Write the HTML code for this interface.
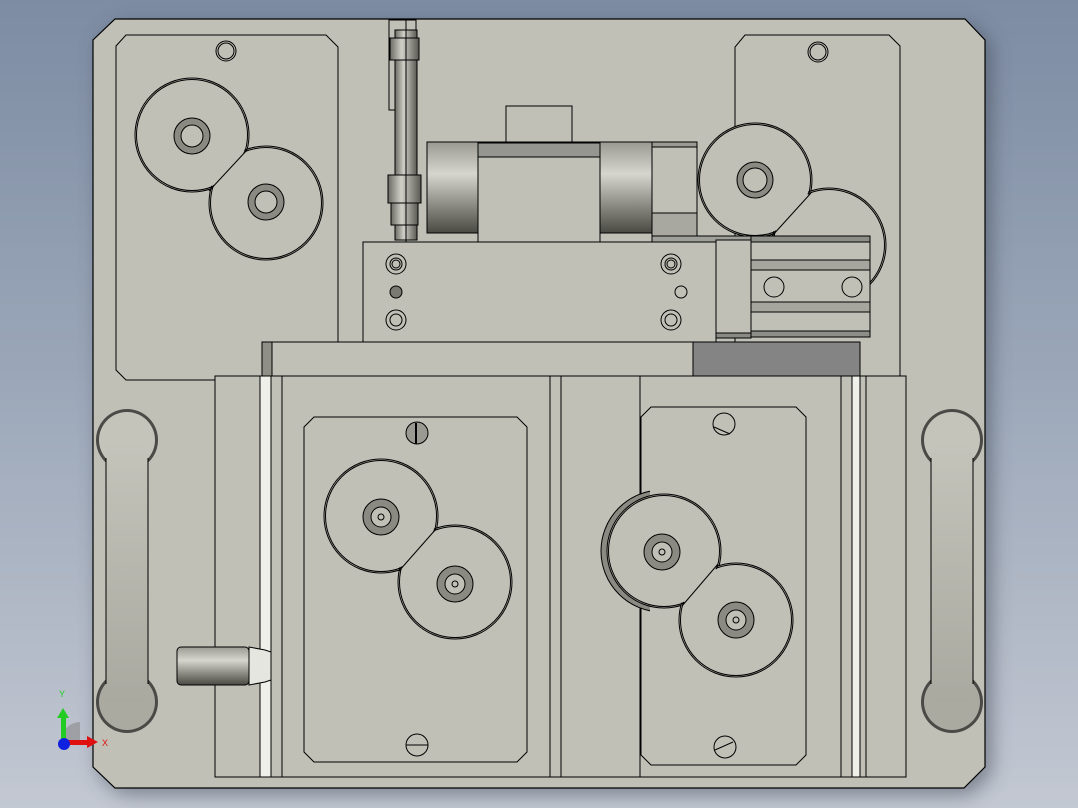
<!DOCTYPE html>
<html><head><style>
html,body{margin:0;padding:0;width:1078px;height:808px;overflow:hidden;}
body{background:linear-gradient(180deg,#7d8ca3 0%,#9aa6b8 45%,#c3c8d2 100%);}
svg{position:absolute;left:0;top:0;}
</style></head><body>
<svg width="1078" height="808" viewBox="0 0 1078 808" xmlns="http://www.w3.org/2000/svg" font-family="Liberation Sans, sans-serif">
<defs>
<linearGradient id="cylV" x1="0" y1="0" x2="0" y2="1">
<stop offset="0" stop-color="#9a9a92"/><stop offset="0.35" stop-color="#d6d6ce"/><stop offset="0.7" stop-color="#8a8a82"/><stop offset="1" stop-color="#4a4a44"/></linearGradient>
<linearGradient id="cylH" x1="0" y1="0" x2="1" y2="0">
<stop offset="0" stop-color="#6a6a64"/><stop offset="0.4" stop-color="#d0d0c8"/><stop offset="1" stop-color="#5a5a54"/></linearGradient>
<linearGradient id="slot" x1="0" y1="0" x2="0" y2="1"><stop offset="0" stop-color="#c4c4bb"/><stop offset="1" stop-color="#a9a9a0"/></linearGradient>
<filter id="blur"><feGaussianBlur stdDeviation="10"/></filter>
<clipPath id="leftHalf"><rect x="590" y="480" width="60" height="140"/></clipPath>
</defs>
<polygon points="115,19 965,19 985,40 985,767 964,788 115,788 93,767 93,40" fill="#3a4250" opacity="0.55" filter="url(#blur)" transform="translate(6,6)"/>
<polygon points="115,19 965,19 985,40 985,767 964,788 115,788 93,767 93,40" fill="#c0c0b7" stroke="#000" stroke-width="1.2"/>

<g fill="none" stroke="#000" stroke-width="1">
<polygon points="126,35 326,35 338,47 338,380 126,380 116,370 116,46" />
<circle cx="226" cy="51" r="10"/><circle cx="226" cy="51" r="8"/>
<polygon points="745,35 889,35 900,46 900,376 735,376 735,47"/>
<circle cx="818" cy="52" r="10"/><circle cx="818" cy="52" r="8"/>
</g>
<g stroke="#000">
<circle cx="192" cy="135" r="57" fill="#c0c0b7"/><circle cx="266" cy="203" r="57" fill="#c0c0b7"/>
<circle cx="192" cy="135" r="55.5" fill="none"/><circle cx="266" cy="203" r="55.5" fill="none"/>
</g>
<circle cx="192" cy="135" r="54.5" fill="#c0c0b7"/><circle cx="266" cy="203" r="54.5" fill="#c0c0b7"/>
<line x1="209" y1="191" x2="247" y2="150" stroke="#000"/>
<g stroke="#000">
<circle cx="755" cy="180" r="57" fill="#c0c0b7"/><circle cx="829" cy="245" r="57" fill="#c0c0b7"/>
<circle cx="755" cy="180" r="55.5" fill="none"/><circle cx="829" cy="245" r="55.5" fill="none"/>
</g>
<circle cx="755" cy="180" r="54.5" fill="#c0c0b7"/><circle cx="829" cy="245" r="54.5" fill="#c0c0b7"/>
<line x1="772" y1="236" x2="811" y2="193" stroke="#000"/>
<g>
<circle cx="192" cy="136" r="18" fill="#8a8a82" stroke="#000"/><circle cx="192" cy="136" r="11" fill="#c0c0b7" stroke="#000"/>
<circle cx="266" cy="202" r="18" fill="#8a8a82" stroke="#000"/><circle cx="266" cy="202" r="11" fill="#c0c0b7" stroke="#000"/>
<circle cx="755" cy="180" r="18" fill="#8a8a82" stroke="#000"/><circle cx="755" cy="180" r="12" fill="#c0c0b7" stroke="#000"/>
</g>

<rect x="389" y="20" width="27" height="90" fill="#c0c0b7" stroke="#000"/>
<rect x="395" y="30" width="22" height="210" fill="url(#cylH)" stroke="#000"/>
<rect x="388" y="175" width="33" height="28" fill="url(#cylH)" stroke="#000"/>
<rect x="391" y="203" width="27" height="22" fill="url(#cylH)" stroke="#000"/>
<rect x="390" y="38" width="29" height="22" fill="url(#cylH)" stroke="#000"/>
<line x1="406" y1="20" x2="406" y2="242" stroke="#000"/>

<rect x="506" y="106" width="66" height="37" fill="#c0c0b7" stroke="#000"/>
<rect x="478" y="142" width="122" height="100" fill="#c0c0b7" stroke="#000"/>
<rect x="478" y="143" width="122" height="14" fill="#969690" stroke="#000"/>
<rect x="427" y="142" width="51" height="91" fill="url(#cylV)" stroke="#000"/>
<rect x="600" y="142" width="52" height="91" fill="url(#cylV)" stroke="#000"/>
<rect x="652" y="142" width="45" height="94" fill="#c0c0b7" stroke="#000"/>
<rect x="652" y="142" width="45" height="5" fill="#9a9a92" stroke="#000"/>
<rect x="652" y="213" width="45" height="23" fill="#a8a8a0" stroke="#000"/>
<rect x="652" y="236" width="100" height="6" fill="#a0a09a" stroke="#000"/>

<rect x="363" y="242" width="353" height="100" fill="#c0c0b7" stroke="#000"/>
<g fill="none" stroke="#000">
<circle cx="396" cy="264" r="10"/><circle cx="396" cy="264" r="6"/><circle cx="396" cy="264" r="4"/>
<circle cx="396" cy="320" r="10"/><circle cx="396" cy="320" r="6"/>
<circle cx="671" cy="264" r="10"/><circle cx="671" cy="264" r="6"/><circle cx="671" cy="264" r="4"/>
<circle cx="671" cy="320" r="10"/><circle cx="671" cy="320" r="6"/>
<circle cx="681" cy="292" r="6"/>
</g>
<circle cx="396" cy="292" r="6" fill="#7a7a72" stroke="#000"/>
<rect x="716" y="240" width="35" height="98" fill="#c0c0b7" stroke="#000"/>
<rect x="716" y="333" width="35" height="5" fill="#8a8a84" stroke="#000"/>
<rect x="751" y="236" width="119" height="101" fill="#c0c0b7" stroke="#000"/>
<rect x="751" y="236" width="119" height="6" fill="#8e8e88" stroke="#000"/>
<rect x="751" y="260" width="119" height="10" fill="#a6a69e" stroke="#000"/>
<rect x="751" y="302" width="119" height="10" fill="#a6a69e" stroke="#000"/>
<rect x="751" y="331" width="119" height="6" fill="#8e8e88" stroke="#000"/>
<circle cx="774" cy="287" r="10" fill="none" stroke="#000"/>
<circle cx="852" cy="287" r="10" fill="none" stroke="#000"/>

<rect x="262" y="342" width="598" height="34" fill="#c0c0b7" stroke="#000"/>
<rect x="262" y="342" width="10" height="34" fill="#8f8f88" stroke="#000"/>
<rect x="693" y="342" width="167" height="34" fill="#848484" stroke="#000"/>

<rect x="215" y="376" width="691" height="401" fill="#c0c0b7" stroke="#000"/>
<rect x="260" y="376" width="11" height="401" fill="#f0f0ea" stroke="#000"/>
<line x1="282" y1="376" x2="282" y2="777" stroke="#000"/>
<line x1="550" y1="376" x2="550" y2="777" stroke="#000"/>
<line x1="561" y1="376" x2="561" y2="777" stroke="#000"/>
<line x1="640" y1="376" x2="640" y2="777" stroke="#000"/>
<line x1="841" y1="376" x2="841" y2="777" stroke="#000"/>
<rect x="852" y="376" width="8" height="401" fill="#f0f0ea" stroke="#000"/>
<line x1="866" y1="376" x2="866" y2="777" stroke="#000"/>

<g fill="none" stroke="#000">
<polygon points="314,417 517,417 527,427 527,752 517,762 314,762 304,752 304,427"/>
<circle cx="417" cy="745" r="11"/>
<line x1="406" y1="745" x2="428" y2="745"/>
<polygon points="651,407 796,407 806,417 806,755 796,765 651,765 641,755 641,417"/>
<circle cx="724" cy="424" r="11"/><line x1="714" y1="427" x2="730" y2="434"/>
<circle cx="725" cy="747" r="11"/><line x1="715" y1="750" x2="733" y2="742"/>
</g>
<circle cx="417" cy="433" r="11" fill="#9a9a92" stroke="#000"/>
<line x1="416" y1="423" x2="416" y2="444" stroke="#000" stroke-width="2"/>
<g stroke="#000">
<circle cx="381" cy="516" r="57" fill="#c0c0b7"/><circle cx="455" cy="582" r="57" fill="#c0c0b7"/>
<circle cx="381" cy="516" r="55.5" fill="none"/><circle cx="455" cy="582" r="55.5" fill="none"/>
</g>
<circle cx="381" cy="516" r="54.5" fill="#c0c0b7"/><circle cx="455" cy="582" r="54.5" fill="#c0c0b7"/>
<line x1="399" y1="571" x2="436" y2="529" stroke="#000"/>
<circle cx="662" cy="551" r="61" fill="#8a8a82" stroke="#000" clip-path="url(#leftHalf)"/>
<g stroke="#000">
<circle cx="664" cy="551" r="57" fill="#c0c0b7"/><circle cx="736" cy="620" r="57" fill="#c0c0b7"/>
<circle cx="664" cy="551" r="55.5" fill="none"/><circle cx="736" cy="620" r="55.5" fill="none"/>
</g>
<circle cx="664" cy="551" r="54.5" fill="#c0c0b7"/><circle cx="736" cy="620" r="54.5" fill="#c0c0b7"/>
<line x1="682" y1="606" x2="718" y2="564" stroke="#000"/>
<g>
<circle cx="381" cy="517" r="18" fill="#8a8a82" stroke="#000"/><circle cx="381" cy="517" r="10" fill="#c0c0b7" stroke="#000"/><circle cx="381" cy="517" r="3" fill="none" stroke="#000"/>
<circle cx="455" cy="584" r="18" fill="#8a8a82" stroke="#000"/><circle cx="455" cy="584" r="10" fill="#c0c0b7" stroke="#000"/><circle cx="455" cy="584" r="3" fill="none" stroke="#000"/>
<circle cx="662" cy="552" r="18" fill="#8a8a82" stroke="#000"/><circle cx="662" cy="552" r="10" fill="#c0c0b7" stroke="#000"/><circle cx="662" cy="552" r="3" fill="none" stroke="#000"/>
<circle cx="736" cy="620" r="18" fill="#8a8a82" stroke="#000"/><circle cx="736" cy="620" r="10" fill="#c0c0b7" stroke="#000"/><circle cx="736" cy="620" r="3" fill="none" stroke="#000"/>
</g>

<g>
<circle cx="127" cy="440" r="31" fill="#4a4a46"/>
<circle cx="127" cy="702" r="31" fill="#4a4a46"/>
<circle cx="127" cy="440" r="28" fill="#c4c4bb"/>
<circle cx="127" cy="702" r="28" fill="#aaaaa1"/>
<rect x="106" y="440" width="42" height="262" fill="url(#slot)"/>
<line x1="106" y1="458" x2="106" y2="684" stroke="#000"/><line x1="148" y1="458" x2="148" y2="684" stroke="#000"/>
<circle cx="952" cy="440" r="31" fill="#4a4a46"/>
<circle cx="952" cy="702" r="31" fill="#4a4a46"/>
<circle cx="952" cy="440" r="28" fill="#c4c4bb"/>
<circle cx="952" cy="702" r="28" fill="#aaaaa1"/>
<rect x="931" y="440" width="42" height="262" fill="url(#slot)"/>
<line x1="931" y1="458" x2="931" y2="684" stroke="#000"/><line x1="973" y1="458" x2="973" y2="684" stroke="#000"/>
</g>

<rect x="177" y="647" width="72" height="38" rx="4" fill="url(#cylV)" stroke="#000"/>
<polygon points="249,647 265,650 271,652 271,680 265,682 249,685" fill="#e6e6e0" stroke="#000"/>

<path d="M62 740 A18 18 0 0 1 80 722 L80 740 Z" fill="#888" opacity="0.6"/>
<rect x="61" y="716" width="5" height="24" fill="#22cc22"/>
<polygon points="57,718 63,708 69,718" fill="#22cc22"/>
<rect x="64" y="740" width="24" height="5" fill="#e01010"/>
<polygon points="87,736 98,742 87,748" fill="#e01010"/>
<circle cx="64" cy="744" r="6" fill="#1020e0"/>
<text x="59" y="697" font-size="9" fill="#22cc22">Y</text>
<text x="102" y="746" font-size="9" fill="#e01010">X</text>
</svg>
</body></html>
